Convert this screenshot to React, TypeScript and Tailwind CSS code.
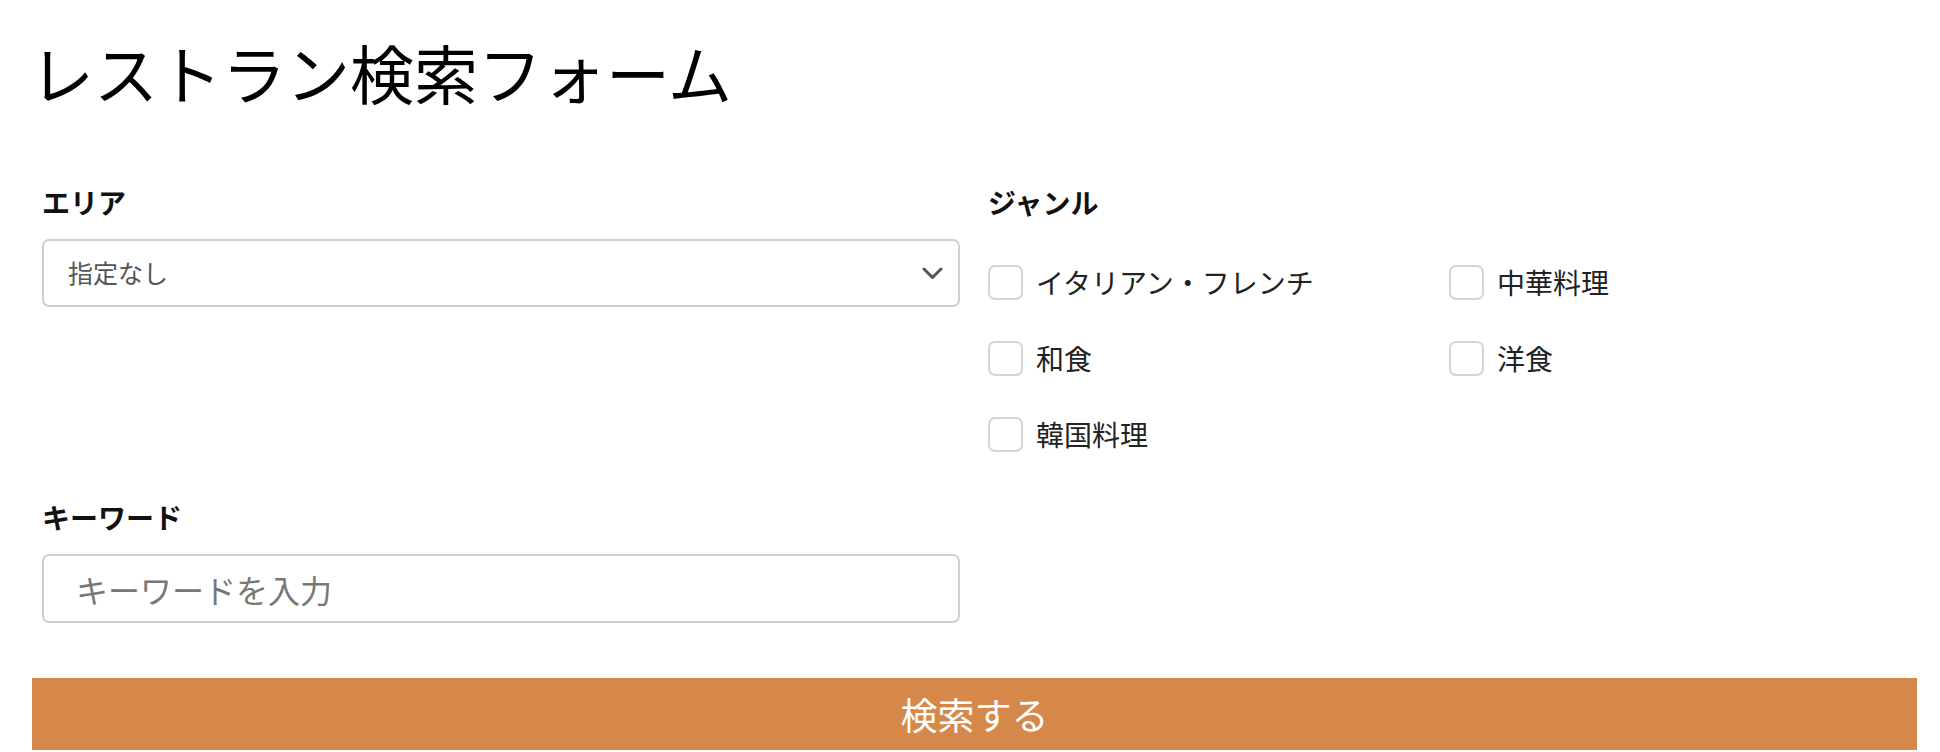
import { useState } from "react";

const genres = ["イタリアン・フレンチ", "中華料理", "和食", "洋食", "韓国料理"];

function ChevronDown() {
  return (
    <svg width="21" height="13" viewBox="0 0 21 13" fill="none">
      <polyline
        points="2,2 10.5,10.5 19,2"
        stroke="#555555"
        strokeWidth="3"
        strokeLinecap="round"
        strokeLinejoin="round"
      />
    </svg>
  );
}

export default function App() {
  const [checked, setChecked] = useState<Record<string, boolean>>({});

  return (
    <div className="w-[1940px] h-[752px] overflow-hidden bg-white font-['Noto_Sans_CJK_JP',sans-serif] text-[#111]">
      {/* Title */}
      <h1 className="pl-[30px] pt-[34px] text-[64px] leading-[74px] font-normal text-black">
        レストラン検索フォーム
      </h1>

      {/* Form fields */}
      <div className="grid grid-cols-[918px_918px] gap-x-[28px] gap-y-[44px] pl-[42px] mt-[75px]">
        <div>
          <label className="block text-[28px] leading-[39px] font-bold">エリア</label>
          <div className="mt-[17px] h-[68px] flex items-center justify-between rounded-[7px] border-2 border-[#d0d0d0] pl-[24px] pr-[15px]">
            <span className="text-[25px] text-[#555]">指定なし</span>
            <ChevronDown />
          </div>
        </div>

        <div>
          <div className="text-[28px] leading-[39px] font-bold">ジャンル</div>
          <div className="mt-[40px] grid grid-cols-[461px_1fr] gap-y-[36px]">
            {genres.map((g) => (
              <label key={g} className="flex items-center gap-[13px] h-[40px] cursor-pointer">
                <span
                  onClick={() => setChecked({ ...checked, [g]: !checked[g] })}
                  className={
                    checked[g]
                      ? "w-[35px] h-[35px] rounded-[7px] border-2 border-[#d6884a] bg-[#d6884a]"
                      : "w-[35px] h-[35px] rounded-[7px] border-2 border-[#d4d4d4] bg-white"
                  }
                />
                <span className="text-[28px] leading-[40px] text-[#222]">{g}</span>
              </label>
            ))}
          </div>
        </div>

        <div>
          <label className="block text-[28px] leading-[39px] font-bold">キーワード</label>
          <input
            type="text"
            placeholder="キーワードを入力"
            className="mt-[17px] w-full h-[69px] rounded-[7px] border-2 border-[#d0d0d0] px-[32px] text-[32px] text-[#222] placeholder:text-[#777] outline-none"
          />
        </div>
        <div />
      </div>

      {/* Submit */}
      <button className="block mt-[55px] ml-[32px] w-[1885px] h-[72px] bg-[#d6884a] text-white text-[37px] leading-[72px]">
        検索する
      </button>
    </div>
  );
}
